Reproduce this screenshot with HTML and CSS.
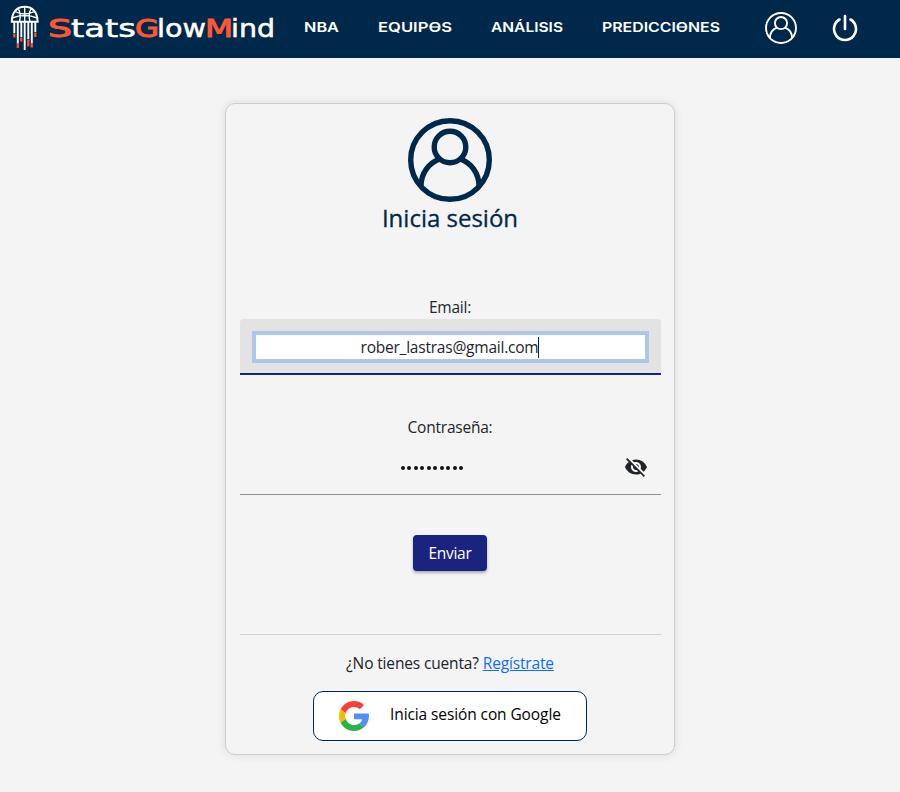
FILE: index.html
```html
<!DOCTYPE html>
<html lang="es">
<head>
<meta charset="utf-8">
<title>StatsGlowMind</title>
<link rel="stylesheet" href="styles.css">
</head>
<body>
<header class="navbar">
  <a class="brand">
    <svg class="ball" viewBox="0 0 30 46" fill="none" stroke="#fff">
      <path d="M1.800 16.700C1.800 7 7 1.800 14.700 1.800S27.600 7 27.600 16.700Z" stroke-width="2"/>
      <path d="M14.700 1.500v15M5 6.500q9.700 5 19.400 0M8 3.400q3.500 5 1.500 13M21.400 3.400q-3.500 5-1.500 13M2 13q12.700-5 25.400 0" stroke-width="1.400"/>
      <path d="M4.300 17v11M7.800 17v22M11.300 17v15M14.700 17v28M18.300 17v17M21.800 17v21M25.300 17v10" stroke-width="1.900"/>
      <path d="M4.300 28.500v4M7.800 38v5M11.300 32.500v4M18.300 34.500v7M21.800 38v4.500M25.300 27.500v4.500" stroke="#ff5733" stroke-width="2.200"/>
    </svg>
    <svg class="wordmark" viewBox="0 0 228 30">
      <text class="hot" x="-1" y="23" textLength="24" lengthAdjust="spacingAndGlyphs">S</text>
      <text x="22" y="23" textLength="65" lengthAdjust="spacingAndGlyphs">tats</text>
      <text class="hot" x="86" y="23" textLength="24" lengthAdjust="spacingAndGlyphs">G</text>
      <text x="108" y="23" textLength="49" lengthAdjust="spacingAndGlyphs">low</text>
      <text class="hot" x="156" y="23" textLength="28" lengthAdjust="spacingAndGlyphs">M</text>
      <text x="182" y="23" textLength="44" lengthAdjust="spacingAndGlyphs">ind</text>
    </svg>
  </a>
  <nav class="links">
    <svg width="36" height="20"><text x="0" y="15" textLength="35" lengthAdjust="spacingAndGlyphs">NBA</text></svg>
    <svg width="75" height="20"><text x="0" y="15" textLength="74" lengthAdjust="spacingAndGlyphs">EQUIPOS</text><path d="M52 10h9"/></svg>
    <svg width="73" height="20"><text x="0" y="15" textLength="72" lengthAdjust="spacingAndGlyphs">ANÁLISIS</text></svg>
    <svg width="119" height="20"><text x="0" y="15" textLength="118" lengthAdjust="spacingAndGlyphs">PREDICCIONES</text><path d="M75 10h9"/></svg>
  </nav>
  <svg class="nav-user" viewBox="0 0 84 84" fill="none" stroke="#fff" stroke-width="5"><circle cx="42" cy="42" r="39.300"/><circle cx="42" cy="29" r="16"/><path d="M13 68C13 55 21 45 31.500 41M71 68C71 55 63 45 52.500 41"/></svg>
  <svg class="power" viewBox="0 0 26 28" fill="none" stroke="#fff" stroke-width="2.600" stroke-linecap="round"><path d="M7.500 5.500a11 11 0 1 0 11 0M13 2v13"/></svg>
</header>
<main class="card">
  <svg class="avatar" viewBox="0 0 84 84" fill="none" stroke="#00284b" stroke-width="5.400"><circle cx="42" cy="42" r="39.300"/><circle cx="42" cy="29" r="15.800"/><path d="M13 68C13 55 21 45 31.500 41M71 68C71 55 63 45 52.500 41"/></svg>
  <h1>Inicia sesión</h1>
  <form class="form">
    <label class="label email-label">Email:</label>
    <div class="field active"><div class="input"><span class="email">rober_lastras@gmail.com</span><i class="caret"></i></div></div>
    <label class="label pass-label">Contraseña:</label>
    <div class="field password">
      <span class="dots"><i></i><i></i><i></i><i></i><i></i><i></i><i></i><i></i><i></i><i></i></span>
      <svg class="eye" viewBox="0 0 24 24"><path d="M12 7c2.760 0 5 2.240 5 5 0 .65-.13 1.260-.36 1.830l2.920 2.920c1.510-1.260 2.700-2.890 3.430-4.750-1.730-4.390-6-7.500-11-7.500-1.400 0-2.740.25-3.980.7l2.160 2.160C10.740 7.130 11.350 7 12 7zM2 4.270l2.280 2.280.46.46C3.080 8.300 1.780 10.020 1 12c1.730 4.390 6 7.500 11 7.500 1.550 0 3.030-.3 4.380-.84l.42.42L19.730 22 21 20.730 3.270 3 2 4.270zM7.530 9.800l1.550 1.550c-.05.21-.08.43-.08.65 0 1.660 1.340 3 3 3 .22 0 .44-.03.65-.08l1.550 1.550c-.67.33-1.410.53-2.200.53-2.760 0-5-2.240-5-5 0-.79.2-1.530.53-2.200zm4.310-.78l3.150 3.150.02-.16c0-1.660-1.340-3-3-3l-.17.01z"/></svg>
    </div>
    <button class="submit" type="button">Enviar</button>
  </form>
  <div class="footer">
    <p><span class="ask">¿No tienes cuenta?</span> <a class="register">Regístrate</a></p>
    <button class="google" type="button">
      <svg viewBox="0 0 48 48"><path fill="#f44336" d="M24 9.500c3.540 0 6.710 1.220 9.210 3.600l6.850-6.850C35.900 2.380 30.470 0 24 0 14.620 0 6.510 5.380 2.560 13.220l7.980 6.190C12.430 13.720 17.740 9.500 24 9.500z"/><path fill="#518ef8" d="M47.500 20H24v9h13c-.6 3-2.300 5.500-4.800 7.200l7.700 6C44.400 38 48 31.600 48 24c0-1.400-.2-2.700-.5-4z"/><path fill="#fbbb00" d="M10.530 28.590A14.500 14.500 0 0 1 10.530 19.410l-7.980-6.190a24 24 0 0 0 0 21.560z"/><path fill="#28b446" d="M24 48c6.480 0 11.930-2.130 15.890-5.810l-7.730-6A14.500 14.500 0 0 1 10.530 28.590l-7.980 6.190C6.510 42.620 14.620 48 24 48z"/></svg>
      <span>Inicia sesión con Google</span>
    </button>
  </div>
</main>
</body>
</html>
```
FILE: styles.css
```css
* { box-sizing: border-box; }
body { margin: 0; height: 792px; overflow: hidden; background: #f4f4f4; color: #212529; font: 15.5px/24px "Open Sans", "Noto Sans", sans-serif; letter-spacing: -.22px; }
svg { display: block; flex: none; letter-spacing: 0; }
.navbar { height: 58px; background: #00284b; display: flex; align-items: flex-start; padding-left: 10px; }
.brand { display: flex; width: 294px; }
.ball { width: 30px; height: 46px; margin-top: 5px; }
.wordmark { width: 228px; height: 30px; margin: 14px 0 0 9px; font: 25px "DejaVu Sans", sans-serif; fill: #fff; stroke: #fff; stroke-width: .5; }
.wordmark .hot { fill: #ff5733; stroke: #ff5733; stroke-width: 1; }
.links { display: flex; margin-top: 17px; width: 461px; }
.links svg { margin-right: 38px; font: 600 13.5px Inter, sans-serif; fill: #fff; stroke-width: 1.3; }
.links path { stroke: #fff; }
.nav-user { width: 32px; height: 32px; margin-top: 12px; }
.power { width: 26px; height: 28px; margin: 14px 0 0 35px; }
.card { width: 450px; height: 652px; margin: 45px auto 0; padding: 14px; border: 1px solid #ccc; border-radius: 10px; box-shadow: 0 0 10px rgba(0,0,0,.1); text-align: center; display: flex; flex-direction: column; align-items: center; }
.avatar { width: 84px; height: 84px; }
h1 { margin: 0; height: 31px; color: #00284b; font-weight: 500; font-size: 24px; line-height: 31px; letter-spacing: 0; -webkit-text-stroke: .3px #00284b; }
.form { width: 100%; display: flex; flex-direction: column; align-items: center; padding-top: 62px; }
.label { height: 24px; }
.field { width: 421px; height: 56px; }
.active { background: #e3e3e3; border-bottom: 2px solid #1a237e; border-radius: 4px 4px 0 0; padding: 12px; }
.input { height: 32px; border: 4px solid #afc6ea; background: #fff; display: flex; justify-content: center; align-items: center; }
.caret { width: 1px; height: 21px; background: #00284b; }
.pass-label { margin-top: 40px; }
.password { border-bottom: 1px solid #8e8e8e; display: flex; align-items: center; position: relative; justify-content: center; }
.dots { display: flex; gap: 2.5px; margin: 2px 36px 0 0; }
.dots i { width: 4px; height: 4px; border-radius: 50%; background: #111; }
.eye { width: 24px; height: 24px; fill: #212529; position: absolute; right: 13px; top: 16px; }
.submit { margin-top: 40px; width: 74px; height: 36px; padding: 0; border: 0; border-radius: 4px; background: #1a237e; color: #fff; font: 15.5px/36px "Open Sans", sans-serif; letter-spacing: -.3px; box-shadow: 0 2px 3px rgba(0,0,0,.3); }
.footer { width: 421px; margin-top: 63px; border-top: 1px solid #d3d3d3; padding-top: 16px; display: flex; flex-direction: column; align-items: center; }
.footer p { margin: 0; letter-spacing: -.15px; }
.register { color: #0d6efd; text-decoration: underline; }
.google { width: 274px; height: 50px; margin-top: 16px; padding: 0 0 0 25px; border: 1px solid #00284b; border-radius: 10px; background: #fff; color: #000; display: flex; align-items: center; gap: 21px; font: 15.5px/24px "Open Sans", sans-serif; letter-spacing: -.1px; }
.google svg { width: 30px; height: 30px; }
.google span { white-space: nowrap; margin-top: -5px; }
```
